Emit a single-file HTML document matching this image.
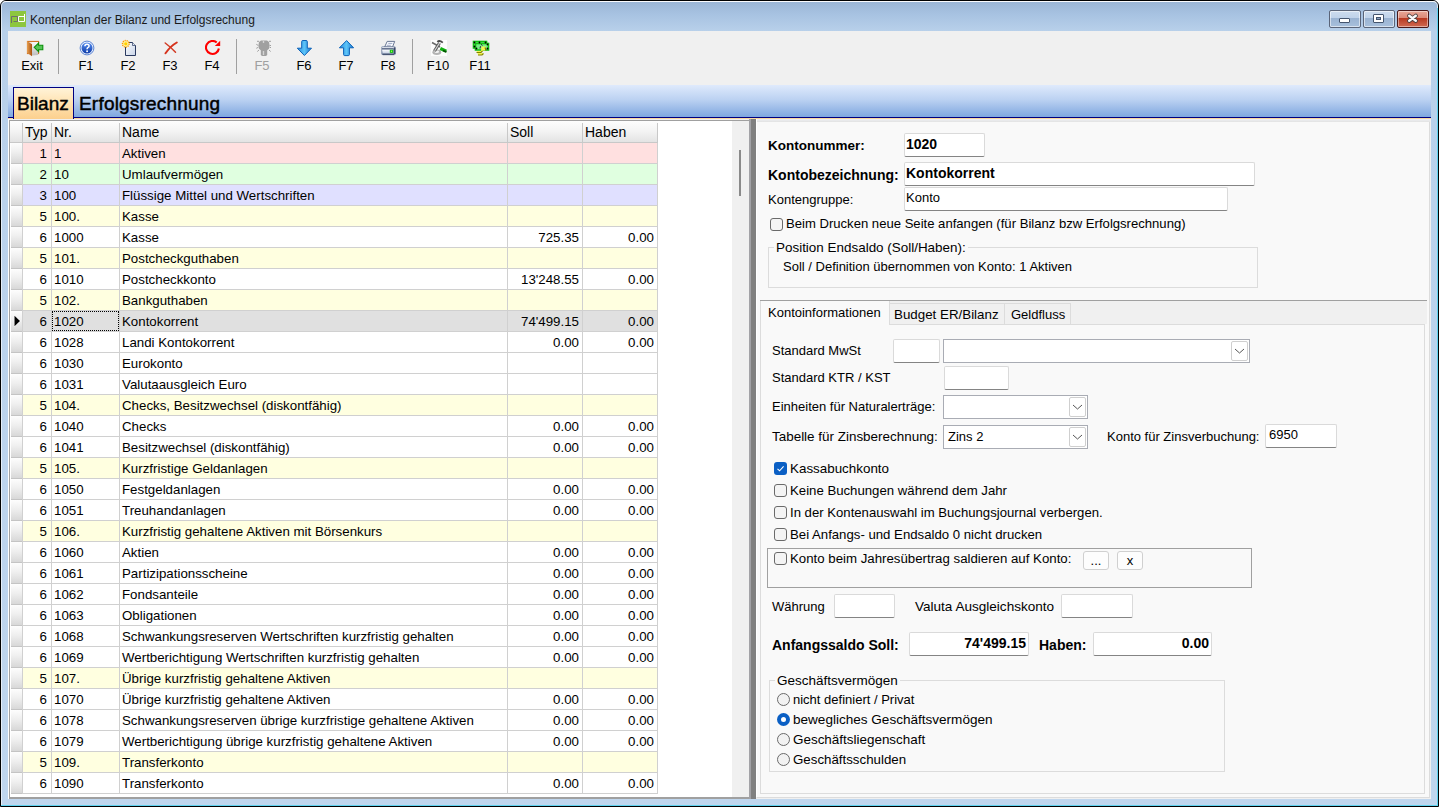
<!DOCTYPE html>
<html><head><meta charset="utf-8"><style>
*{margin:0;padding:0;box-sizing:border-box}
html,body{width:1439px;height:807px;overflow:hidden}
body{position:relative;font-family:"Liberation Sans",sans-serif;font-size:13px;color:#000;background:#fff}
.a{position:absolute}
.t{position:absolute;white-space:nowrap;line-height:16px}
.r{text-align:right}
.inp{position:absolute;background:#fff;border:1px solid #dadada;border-bottom-color:#848484;border-radius:2px}
.cb{position:absolute;width:13px;height:13px;border:1px solid #6a6a6a;border-radius:3px;background:#f4f4f4}
.rb{position:absolute;width:13px;height:13px;border:1px solid #6a6a6a;border-radius:50%;background:#f2f2f2}
.btn{position:absolute;background:#fdfdfd;border:1px solid #d0d0d0;border-radius:3px}
.dd{position:absolute;width:17px;border:1px solid #cfcfcf;border-radius:2px;background:#fff}
</style></head><body>

<div class="a" style="left:0;top:0;width:1439px;height:807px;border:1px solid #000;border-radius:6px 6px 0 0;background:linear-gradient(#9ab5d5 0px,#a8c3e2 14px,#b8d0ea 30px,#bad2ec 200px,#bfd6ee 807px)"></div>
<div class="a" style="left:1px;top:1px;width:1437px;height:805px;border:1px solid rgba(255,255,255,.6);border-top-color:rgba(255,255,255,.95);border-bottom:none;border-radius:5px 5px 0 0"></div>
<div class="a" style="left:1437px;top:8px;width:1px;height:798px;background:#5fd3f0"></div>
<div class="a" style="left:1px;top:805px;width:1437px;height:1px;background:#5fd3f0"></div>
<div class="a" style="left:10px;top:11px;width:16px;height:16px;background:#8dc63f"></div>
<svg class="a" style="left:10px;top:11px" width="16" height="16"><path d="M1.5 12V5.5H7.5V10.5H3.5" fill="none" stroke="#6d6d6d" stroke-width="1"/><path d="M14.5 5.5H8.5V10.5H14.5V3" fill="none" stroke="#fff" stroke-width="1"/></svg>
<div class="t" style="left:30px;top:12px;font-size:12px;color:#1a1a1a">Kontenplan der Bilanz und Erfolgsrechung</div>
<div class="a" style="left:1329px;top:10px;width:32px;height:18px;border:1px solid #5a6478;border-radius:2px;box-shadow:inset 0 0 0 1px rgba(255,255,255,.55);background:linear-gradient(#cddcee 0,#c0d3ea 42%,#9ab3d2 46%,#a8c0dc 100%)"></div>
<div class="a" style="left:1339px;top:18px;width:11px;height:5px;background:#fff;border:1px solid #44556e;border-radius:1px"></div>
<div class="a" style="left:1363px;top:10px;width:32px;height:18px;border:1px solid #5a6478;border-radius:2px;box-shadow:inset 0 0 0 1px rgba(255,255,255,.55);background:linear-gradient(#cddcee 0,#c0d3ea 42%,#9ab3d2 46%,#a8c0dc 100%)"></div>
<div class="a" style="left:1373px;top:14px;width:11px;height:9px;background:#fff;border:1px solid #44556e;border-radius:1px"></div><div class="a" style="left:1376px;top:17px;width:5px;height:3px;background:#8aa2c2;border:1px solid #44556e"></div>
<div class="a" style="left:1397px;top:10px;width:32px;height:18px;border:1px solid #4a1818;border-radius:2px;box-shadow:inset 0 0 0 1px rgba(255,255,255,.45);background:linear-gradient(#e8a898 0,#dc8a78 42%,#b83a22 46%,#d06a52 100%)"></div>
<svg class="a" style="left:1405px;top:12px" width="16" height="14"><path d="M4.2 3.8L10.8 8.8M10.8 3.8L4.2 8.8" stroke="#4a4040" stroke-width="4.2" stroke-linecap="round"/><path d="M4.2 3.8L10.8 8.8M10.8 3.8L4.2 8.8" stroke="#fafafa" stroke-width="2.4" stroke-linecap="round"/></svg>
<div class="a" style="left:8px;top:31px;width:1423px;height:768px;background:#f0f0f0"></div>
<div class="a" style="left:8px;top:119px;width:1px;height:680px;background:#fdfdfd"></div>
<div class="t" style="left:7px;top:58px;width:50px;text-align:center;color:#000">Exit</div>
<svg class="a" style="left:26px;top:40px" width="18" height="17"><defs><linearGradient id="dg" x1="0" x2="1"><stop offset="0" stop-color="#e8a050"/><stop offset="1" stop-color="#a85010"/></linearGradient><linearGradient id="fg" x1="0" x2="0" y1="0" y2="1"><stop offset="0" stop-color="#fafafa"/><stop offset="1" stop-color="#bcbcbc"/></linearGradient></defs><rect x="1.5" y="1.5" width="11" height="12" fill="none" stroke="#d27528" stroke-width="1.2"/><path d="M6 2.3H12V15L6 15.6Z" fill="url(#fg)"/><path d="M1 1L6 4.3V16.3L1 12.8Z" fill="url(#dg)"/><path d="M8.2 7.3L12.6 3.1V5.2H16.8V9.7H12.6V11.6Z" fill="#56c456" stroke="#089008" stroke-width="1.1"/></svg>
<div class="a" style="left:58px;top:39px;width:1px;height:35px;background:#a0a0a0"></div>
<div class="t" style="left:61px;top:58px;width:50px;text-align:center;color:#000">F1</div>
<svg class="a" style="left:79px;top:40px" width="16" height="16"><defs><linearGradient id="hg" x1="0" x2="0" y1="0" y2="1"><stop offset="0" stop-color="#5a90f0"/><stop offset="1" stop-color="#0c3aa8"/></linearGradient></defs><circle cx="8" cy="8" r="6.9" fill="#eef3fc" stroke="#4a78d0" stroke-width="0.9"/><circle cx="8" cy="8" r="5.5" fill="url(#hg)"/><path d="M5.9 6.2Q5.9 4.2 8 4.2Q10.1 4.2 10.1 6Q10.1 7.1 8.9 7.7Q8.1 8.1 8.1 9.2" fill="none" stroke="#fff" stroke-width="1.5"/><circle cx="8.1" cy="11.3" r="0.95" fill="#fff"/></svg>
<div class="t" style="left:103px;top:58px;width:50px;text-align:center;color:#000">F2</div>
<svg class="a" style="left:120px;top:38px" width="18" height="19"><defs><linearGradient id="pg" x1="0" x2="1" y1="0" y2="1"><stop offset="0" stop-color="#ffffff"/><stop offset="1" stop-color="#c8d4e8"/></linearGradient></defs><path d="M5.5 4.5H12.5L15.5 7.5V17.5H5.5Z" fill="url(#pg)" stroke="#2a3a60" stroke-width="1"/><path d="M12.5 4.5V7.5H15.5" fill="#e0e8f4" stroke="#2a3a60" stroke-width=".7"/><circle cx="5.8" cy="5.8" r="3.3" fill="#fff2a0" stroke="#ff9800" stroke-width="1.4" stroke-dasharray="1.1 0.9"/><circle cx="5.8" cy="5.8" r="1.6" fill="#ffd000"/></svg>
<div class="t" style="left:145px;top:58px;width:50px;text-align:center;color:#000">F3</div>
<svg class="a" style="left:163px;top:40px" width="16" height="16"><path d="M2.2 3Q7 6.5 12.5 12.3" fill="none" stroke="#d23a24" stroke-width="1.5" stroke-linecap="round"/><path d="M13.8 2.5Q7.5 6 2.5 13.3" fill="none" stroke="#d6321c" stroke-width="2" stroke-linecap="round"/></svg>
<div class="t" style="left:187px;top:58px;width:50px;text-align:center;color:#000">F4</div>
<svg class="a" style="left:205px;top:40px" width="16" height="16"><path d="M11.7 2.5A6.5 6.5 0 1 0 13.9 8.5" fill="none" stroke="#ff0000" stroke-width="2.1"/><path d="M9.8 5.9L15.2 0.8V5.9Z" fill="#ff0000"/></svg>
<div class="a" style="left:236px;top:39px;width:1px;height:35px;background:#a0a0a0"></div>
<div class="t" style="left:237px;top:58px;width:50px;text-align:center;color:#a0a0a0">F5</div>
<svg class="a" style="left:252px;top:37px" width="24" height="21"><path d="M9 3.6H15L17 5L17.6 8.5L17 11.8L15.2 13.3V18L14 19H10L8.8 18V13.3L7 11.8L6.4 8.5L7 5Z" fill="#a0a0a0"/><circle cx="11.5" cy="5" r=".8" fill="#f0f0f0"/><circle cx="11.5" cy="15" r=".8" fill="#f0f0f0"/><circle cx="11.5" cy="17" r=".8" fill="#f0f0f0"/><path d="M5 4.3H7M17 4.3H19M4.3 7.3L6.3 8.5M17.7 8.5L19 8.5M4.3 11.3L6.3 10.3M17.7 10.5L19 10.5M5.3 14.5L7 13M17 13L18.7 14.5" stroke="#a0a0a0" stroke-width="1"/></svg>
<div class="t" style="left:279px;top:58px;width:50px;text-align:center;color:#000">F6</div>
<svg class="a" style="left:296px;top:40px" width="17" height="17"><defs><linearGradient id="ag" x1="0" x2="1"><stop offset="0" stop-color="#2a8ee0"/><stop offset=".5" stop-color="#5cc4f8"/><stop offset="1" stop-color="#1a78d0"/></linearGradient></defs><path d="M5.7 1.6Q5.7 0.5 6.8 0.5H10.2Q11.3 0.5 11.3 1.6V8.2H15.5L8.4 15.5L1.3 8.2H5.7Z" fill="url(#ag)" stroke="#0c62b8" stroke-width="1"/></svg>
<div class="t" style="left:321px;top:58px;width:50px;text-align:center;color:#000">F7</div>
<svg class="a" style="left:338px;top:40px" width="17" height="17"><path d="M5.6 14.6Q5.6 15.6 6.7 15.6H10.3Q11.4 15.6 11.4 14.6V7.8H15.6L8.6 0.6L1.4 7.8H5.6Z" fill="url(#ag)" stroke="#0c62b8" stroke-width="1"/></svg>
<div class="t" style="left:363px;top:58px;width:50px;text-align:center;color:#000">F8</div>
<svg class="a" style="left:376px;top:37px" width="24" height="21"><defs><linearGradient id="prg" x1="0" x2="0" y1="0" y2="1"><stop offset="0" stop-color="#ffffff"/><stop offset="1" stop-color="#c8d2e4"/></linearGradient></defs><path d="M6.5 9.2H18.2Q19.8 9.2 19.8 11V16.5Q19.8 18.2 18 18.2H7.2Q5.2 18.2 5.2 16.2V10.8Q5.2 9.2 6.5 9.2Z" fill="#8a98b2"/><path d="M11.2 4.4H18.7L16.6 9.8H8.7Z" fill="#f8faff" stroke="#5a6a88" stroke-width="0.9"/><path d="M12.3 6.4H16.3M10.8 8.3H14.8" stroke="#8a98b8" stroke-width="0.8"/><path d="M6.2 10.2H17.8V11.4H6.2Z" fill="#eef2f8"/><path d="M6 12.6H17V16.2H6.8Z" fill="url(#prg)"/><path d="M6 11.8H17.6" stroke="#4a5878" stroke-width="1"/><path d="M18.6 10.5V17" stroke="#3a4866" stroke-width="1.4"/><path d="M6.5 17.3H18" stroke="#3a4866" stroke-width="1.1"/><rect x="13.8" y="12.8" width="3.4" height="3.1" fill="#12c012"/><circle cx="15.5" cy="14.3" r=".7" fill="#b0ff60"/></svg>
<div class="a" style="left:412px;top:39px;width:1px;height:35px;background:#a0a0a0"></div>
<div class="t" style="left:413px;top:58px;width:50px;text-align:center;color:#000">F10</div>
<svg class="a" style="left:429px;top:38px" width="20" height="20"><rect x="2" y="2" width="16" height="16" fill="#fdfdfd"/><ellipse cx="7.8" cy="14.2" rx="4.4" ry="2.7" fill="#b4b4b4"/><ellipse cx="7.8" cy="13.8" rx="2.3" ry="1.2" fill="#f4f4f4"/><path d="M3 4.5L11 9" stroke="#6a6a6a" stroke-width="1.5"/><path d="M10.5 5L5.5 13" stroke="#5a5a5a" stroke-width="3.2"/><path d="M10.5 5L5.6 12.8" stroke="#d8d8d8" stroke-width="1.2"/><path d="M8.3 3.8Q10.5 1.8 13.8 4.6" fill="none" stroke="#4a4a4a" stroke-width="1.8"/><path d="M11.3 10.5L17.3 13.3" stroke="#10b010" stroke-width="3.2"/><path d="M14 12.5L17.5 14" stroke="#045004" stroke-width="1.6"/></svg>
<div class="t" style="left:455px;top:58px;width:50px;text-align:center;color:#000">F11</div>
<svg class="a" style="left:470px;top:38px" width="22" height="20"><rect x="3.5" y="3.5" width="13" height="6.5" fill="#76ee86" stroke="#12c012" stroke-width="1.6"/><rect x="5.5" y="5.5" width="13" height="6.5" fill="#76ee86" stroke="#12c012" stroke-width="1.6"/><g fill="#000"><circle cx="4.5" cy="4.5" r=".9"/><circle cx="9.5" cy="4.5" r=".9"/><circle cx="15.5" cy="4.5" r=".9"/><circle cx="4.5" cy="8.5" r=".9"/><circle cx="6.5" cy="10.5" r=".9"/><circle cx="17.5" cy="6.5" r=".9"/><circle cx="17.5" cy="10.5" r=".9"/></g><path d="M11 6.2L12.5 7.6M10.5 8.2L10 10.5" stroke="#302040" stroke-width="1"/><path d="M11.5 8.5H16L15.5 12.5H13L11.5 14H6L7.5 13H11Z" fill="#f4f450"/><path d="M7.5 15H13.5L12.5 17H8Z" fill="#f4f450"/><path d="M6.5 14.5H11L12.5 13M8 17H12L13.5 15.5M15 9.5L16 12.5" fill="none" stroke="#808000" stroke-width="1.1"/></svg>
<div class="a" style="left:8px;top:85px;width:1423px;height:32px;background:linear-gradient(#dfeafc,#bcd2f2 45%,#7fa7df)"></div>
<div class="a" style="left:8px;top:117px;width:1423px;height:1px;background:#000080"></div>
<div class="a" style="left:8px;top:118px;width:1423px;height:1px;background:#fcd89e"></div>
<div class="a" style="left:13px;top:87px;width:61px;height:32px;border:1px solid #000080;border-width:1.5px 1.5px 0 1.5px;background:linear-gradient(#fff3d8,#ffe2b0 50%,#fcd08e)"></div>
<div class="t" style="left:17px;top:93px;font-size:19px;line-height:22px;-webkit-text-stroke:0.45px #000">Bilanz</div>
<div class="t" style="left:79px;top:93px;font-size:19px;line-height:22px;letter-spacing:0.2px;-webkit-text-stroke:0.45px #000">Erfolgsrechnung</div>
<div class="a" style="left:9px;top:120px;width:740px;height:679px;background:#fff;border:1px solid #a0a0a0;border-right:none"></div>
<div class="a" style="left:732px;top:121px;width:17px;height:677px;background:#f0f0f0"></div>
<div class="a" style="left:739px;top:150px;width:2px;height:46px;background:#8a8a8a"></div>
<div class="a" style="left:10px;top:121px;width:648px;height:22px;background:linear-gradient(#fdfdfd,#f3f3f3 50%,#e3e3e3);border-bottom:1px solid #c8c8c8"></div>
<div class="a" style="left:22px;top:123px;width:1px;height:19px;background:#c8c8c8"></div>
<div class="a" style="left:51px;top:123px;width:1px;height:19px;background:#c8c8c8"></div>
<div class="a" style="left:119px;top:123px;width:1px;height:19px;background:#c8c8c8"></div>
<div class="a" style="left:507px;top:123px;width:1px;height:19px;background:#c8c8c8"></div>
<div class="a" style="left:582px;top:123px;width:1px;height:19px;background:#c8c8c8"></div>
<div class="a" style="left:657px;top:123px;width:1px;height:19px;background:#c8c8c8"></div>
<div class="t" style="left:25px;top:124px;font-size:14px">Typ</div>
<div class="t" style="left:54px;top:124px;font-size:14px">Nr.</div>
<div class="t" style="left:122px;top:124px;font-size:14px">Name</div>
<div class="t" style="left:510px;top:124px;font-size:14px">Soll</div>
<div class="t" style="left:585px;top:124px;font-size:14px">Haben</div>
<div class="a" style="left:11px;top:143px;width:11px;height:21px;background:linear-gradient(#fdfdfd,#efefef 45%,#d8d8d8);border-bottom:1px solid #c4c4c4"></div>
<div class="a" style="left:23px;top:143px;width:635px;height:20px;background:#ffe0e0"></div>
<div class="a" style="left:23px;top:163px;width:635px;height:1px;background:#d0d0d0"></div>
<div class="a" style="left:22px;top:143px;width:1px;height:21px;background:#d0d0d0"></div>
<div class="a" style="left:51px;top:143px;width:1px;height:21px;background:#d0d0d0"></div>
<div class="a" style="left:119px;top:143px;width:1px;height:21px;background:#d0d0d0"></div>
<div class="a" style="left:507px;top:143px;width:1px;height:21px;background:#d0d0d0"></div>
<div class="a" style="left:582px;top:143px;width:1px;height:21px;background:#d0d0d0"></div>
<div class="a" style="left:657px;top:143px;width:1px;height:21px;background:#d0d0d0"></div>
<div class="t r" style="left:23px;top:146px;width:24px;font-size:13.3px">1</div>
<div class="t" style="left:54px;top:146px;font-size:13.3px">1</div>
<div class="t" style="left:122px;top:146px;font-size:13.3px">Aktiven</div>
<div class="a" style="left:11px;top:164px;width:11px;height:21px;background:linear-gradient(#fdfdfd,#efefef 45%,#d8d8d8);border-bottom:1px solid #c4c4c4"></div>
<div class="a" style="left:23px;top:164px;width:635px;height:20px;background:#e0ffe0"></div>
<div class="a" style="left:23px;top:184px;width:635px;height:1px;background:#d0d0d0"></div>
<div class="a" style="left:22px;top:164px;width:1px;height:21px;background:#d0d0d0"></div>
<div class="a" style="left:51px;top:164px;width:1px;height:21px;background:#d0d0d0"></div>
<div class="a" style="left:119px;top:164px;width:1px;height:21px;background:#d0d0d0"></div>
<div class="a" style="left:507px;top:164px;width:1px;height:21px;background:#d0d0d0"></div>
<div class="a" style="left:582px;top:164px;width:1px;height:21px;background:#d0d0d0"></div>
<div class="a" style="left:657px;top:164px;width:1px;height:21px;background:#d0d0d0"></div>
<div class="t r" style="left:23px;top:167px;width:24px;font-size:13.3px">2</div>
<div class="t" style="left:54px;top:167px;font-size:13.3px">10</div>
<div class="t" style="left:122px;top:167px;font-size:13.3px">Umlaufvermögen</div>
<div class="a" style="left:11px;top:185px;width:11px;height:21px;background:linear-gradient(#fdfdfd,#efefef 45%,#d8d8d8);border-bottom:1px solid #c4c4c4"></div>
<div class="a" style="left:23px;top:185px;width:635px;height:20px;background:#e0e0ff"></div>
<div class="a" style="left:23px;top:205px;width:635px;height:1px;background:#d0d0d0"></div>
<div class="a" style="left:22px;top:185px;width:1px;height:21px;background:#d0d0d0"></div>
<div class="a" style="left:51px;top:185px;width:1px;height:21px;background:#d0d0d0"></div>
<div class="a" style="left:119px;top:185px;width:1px;height:21px;background:#d0d0d0"></div>
<div class="a" style="left:507px;top:185px;width:1px;height:21px;background:#d0d0d0"></div>
<div class="a" style="left:582px;top:185px;width:1px;height:21px;background:#d0d0d0"></div>
<div class="a" style="left:657px;top:185px;width:1px;height:21px;background:#d0d0d0"></div>
<div class="t r" style="left:23px;top:188px;width:24px;font-size:13.3px">3</div>
<div class="t" style="left:54px;top:188px;font-size:13.3px">100</div>
<div class="t" style="left:122px;top:188px;font-size:13.3px">Flüssige Mittel und Wertschriften</div>
<div class="a" style="left:11px;top:206px;width:11px;height:21px;background:linear-gradient(#fdfdfd,#efefef 45%,#d8d8d8);border-bottom:1px solid #c4c4c4"></div>
<div class="a" style="left:23px;top:206px;width:635px;height:20px;background:#ffffe0"></div>
<div class="a" style="left:23px;top:226px;width:635px;height:1px;background:#d0d0d0"></div>
<div class="a" style="left:22px;top:206px;width:1px;height:21px;background:#d0d0d0"></div>
<div class="a" style="left:51px;top:206px;width:1px;height:21px;background:#d0d0d0"></div>
<div class="a" style="left:119px;top:206px;width:1px;height:21px;background:#d0d0d0"></div>
<div class="a" style="left:507px;top:206px;width:1px;height:21px;background:#d0d0d0"></div>
<div class="a" style="left:582px;top:206px;width:1px;height:21px;background:#d0d0d0"></div>
<div class="a" style="left:657px;top:206px;width:1px;height:21px;background:#d0d0d0"></div>
<div class="t r" style="left:23px;top:209px;width:24px;font-size:13.3px">5</div>
<div class="t" style="left:54px;top:209px;font-size:13.3px">100.</div>
<div class="t" style="left:122px;top:209px;font-size:13.3px">Kasse</div>
<div class="a" style="left:11px;top:227px;width:11px;height:21px;background:linear-gradient(#fdfdfd,#efefef 45%,#d8d8d8);border-bottom:1px solid #c4c4c4"></div>
<div class="a" style="left:23px;top:227px;width:635px;height:20px;background:#ffffff"></div>
<div class="a" style="left:23px;top:247px;width:635px;height:1px;background:#d0d0d0"></div>
<div class="a" style="left:22px;top:227px;width:1px;height:21px;background:#d0d0d0"></div>
<div class="a" style="left:51px;top:227px;width:1px;height:21px;background:#d0d0d0"></div>
<div class="a" style="left:119px;top:227px;width:1px;height:21px;background:#d0d0d0"></div>
<div class="a" style="left:507px;top:227px;width:1px;height:21px;background:#d0d0d0"></div>
<div class="a" style="left:582px;top:227px;width:1px;height:21px;background:#d0d0d0"></div>
<div class="a" style="left:657px;top:227px;width:1px;height:21px;background:#d0d0d0"></div>
<div class="t r" style="left:23px;top:230px;width:24px;font-size:13.3px">6</div>
<div class="t" style="left:54px;top:230px;font-size:13.3px">1000</div>
<div class="t" style="left:122px;top:230px;font-size:13.3px">Kasse</div>
<div class="t r" style="left:508px;top:230px;width:71px;font-size:13.3px">725.35</div>
<div class="t r" style="left:583px;top:230px;width:71px;font-size:13.3px">0.00</div>
<div class="a" style="left:11px;top:248px;width:11px;height:21px;background:linear-gradient(#fdfdfd,#efefef 45%,#d8d8d8);border-bottom:1px solid #c4c4c4"></div>
<div class="a" style="left:23px;top:248px;width:635px;height:20px;background:#ffffe0"></div>
<div class="a" style="left:23px;top:268px;width:635px;height:1px;background:#d0d0d0"></div>
<div class="a" style="left:22px;top:248px;width:1px;height:21px;background:#d0d0d0"></div>
<div class="a" style="left:51px;top:248px;width:1px;height:21px;background:#d0d0d0"></div>
<div class="a" style="left:119px;top:248px;width:1px;height:21px;background:#d0d0d0"></div>
<div class="a" style="left:507px;top:248px;width:1px;height:21px;background:#d0d0d0"></div>
<div class="a" style="left:582px;top:248px;width:1px;height:21px;background:#d0d0d0"></div>
<div class="a" style="left:657px;top:248px;width:1px;height:21px;background:#d0d0d0"></div>
<div class="t r" style="left:23px;top:251px;width:24px;font-size:13.3px">5</div>
<div class="t" style="left:54px;top:251px;font-size:13.3px">101.</div>
<div class="t" style="left:122px;top:251px;font-size:13.3px">Postcheckguthaben</div>
<div class="a" style="left:11px;top:269px;width:11px;height:21px;background:linear-gradient(#fdfdfd,#efefef 45%,#d8d8d8);border-bottom:1px solid #c4c4c4"></div>
<div class="a" style="left:23px;top:269px;width:635px;height:20px;background:#ffffff"></div>
<div class="a" style="left:23px;top:289px;width:635px;height:1px;background:#d0d0d0"></div>
<div class="a" style="left:22px;top:269px;width:1px;height:21px;background:#d0d0d0"></div>
<div class="a" style="left:51px;top:269px;width:1px;height:21px;background:#d0d0d0"></div>
<div class="a" style="left:119px;top:269px;width:1px;height:21px;background:#d0d0d0"></div>
<div class="a" style="left:507px;top:269px;width:1px;height:21px;background:#d0d0d0"></div>
<div class="a" style="left:582px;top:269px;width:1px;height:21px;background:#d0d0d0"></div>
<div class="a" style="left:657px;top:269px;width:1px;height:21px;background:#d0d0d0"></div>
<div class="t r" style="left:23px;top:272px;width:24px;font-size:13.3px">6</div>
<div class="t" style="left:54px;top:272px;font-size:13.3px">1010</div>
<div class="t" style="left:122px;top:272px;font-size:13.3px">Postcheckkonto</div>
<div class="t r" style="left:508px;top:272px;width:71px;font-size:13.3px">13'248.55</div>
<div class="t r" style="left:583px;top:272px;width:71px;font-size:13.3px">0.00</div>
<div class="a" style="left:11px;top:290px;width:11px;height:21px;background:linear-gradient(#fdfdfd,#efefef 45%,#d8d8d8);border-bottom:1px solid #c4c4c4"></div>
<div class="a" style="left:23px;top:290px;width:635px;height:20px;background:#ffffe0"></div>
<div class="a" style="left:23px;top:310px;width:635px;height:1px;background:#d0d0d0"></div>
<div class="a" style="left:22px;top:290px;width:1px;height:21px;background:#d0d0d0"></div>
<div class="a" style="left:51px;top:290px;width:1px;height:21px;background:#d0d0d0"></div>
<div class="a" style="left:119px;top:290px;width:1px;height:21px;background:#d0d0d0"></div>
<div class="a" style="left:507px;top:290px;width:1px;height:21px;background:#d0d0d0"></div>
<div class="a" style="left:582px;top:290px;width:1px;height:21px;background:#d0d0d0"></div>
<div class="a" style="left:657px;top:290px;width:1px;height:21px;background:#d0d0d0"></div>
<div class="t r" style="left:23px;top:293px;width:24px;font-size:13.3px">5</div>
<div class="t" style="left:54px;top:293px;font-size:13.3px">102.</div>
<div class="t" style="left:122px;top:293px;font-size:13.3px">Bankguthaben</div>
<div class="a" style="left:11px;top:311px;width:11px;height:21px;background:linear-gradient(#fdfdfd,#efefef 45%,#d8d8d8);border-bottom:1px solid #c4c4c4"></div>
<div class="a" style="left:23px;top:311px;width:635px;height:20px;background:#e0e0e0"></div>
<div class="a" style="left:23px;top:331px;width:635px;height:1px;background:#d0d0d0"></div>
<div class="a" style="left:22px;top:311px;width:1px;height:21px;background:#d0d0d0"></div>
<div class="a" style="left:51px;top:311px;width:1px;height:21px;background:#d0d0d0"></div>
<div class="a" style="left:119px;top:311px;width:1px;height:21px;background:#d0d0d0"></div>
<div class="a" style="left:507px;top:311px;width:1px;height:21px;background:#d0d0d0"></div>
<div class="a" style="left:582px;top:311px;width:1px;height:21px;background:#d0d0d0"></div>
<div class="a" style="left:657px;top:311px;width:1px;height:21px;background:#d0d0d0"></div>
<div class="t r" style="left:23px;top:314px;width:24px;font-size:13.3px">6</div>
<div class="t" style="left:54px;top:314px;font-size:13.3px">1020</div>
<div class="t" style="left:122px;top:314px;font-size:13.3px">Kontokorrent</div>
<div class="t r" style="left:508px;top:314px;width:71px;font-size:13.3px">74'499.15</div>
<div class="t r" style="left:583px;top:314px;width:71px;font-size:13.3px">0.00</div>
<svg class="a" style="left:13px;top:314px" width="9" height="14"><path d="M1 1V13L8 7Z" fill="#fff"/><path d="M1.5 1.8V12.2L7 7Z" fill="#000"/></svg>
<div class="a" style="left:52px;top:311px;width:67px;height:20px;border:1px dotted #000"></div>
<div class="a" style="left:11px;top:332px;width:11px;height:21px;background:linear-gradient(#fdfdfd,#efefef 45%,#d8d8d8);border-bottom:1px solid #c4c4c4"></div>
<div class="a" style="left:23px;top:332px;width:635px;height:20px;background:#ffffff"></div>
<div class="a" style="left:23px;top:352px;width:635px;height:1px;background:#d0d0d0"></div>
<div class="a" style="left:22px;top:332px;width:1px;height:21px;background:#d0d0d0"></div>
<div class="a" style="left:51px;top:332px;width:1px;height:21px;background:#d0d0d0"></div>
<div class="a" style="left:119px;top:332px;width:1px;height:21px;background:#d0d0d0"></div>
<div class="a" style="left:507px;top:332px;width:1px;height:21px;background:#d0d0d0"></div>
<div class="a" style="left:582px;top:332px;width:1px;height:21px;background:#d0d0d0"></div>
<div class="a" style="left:657px;top:332px;width:1px;height:21px;background:#d0d0d0"></div>
<div class="t r" style="left:23px;top:335px;width:24px;font-size:13.3px">6</div>
<div class="t" style="left:54px;top:335px;font-size:13.3px">1028</div>
<div class="t" style="left:122px;top:335px;font-size:13.3px">Landi Kontokorrent</div>
<div class="t r" style="left:508px;top:335px;width:71px;font-size:13.3px">0.00</div>
<div class="t r" style="left:583px;top:335px;width:71px;font-size:13.3px">0.00</div>
<div class="a" style="left:11px;top:353px;width:11px;height:21px;background:linear-gradient(#fdfdfd,#efefef 45%,#d8d8d8);border-bottom:1px solid #c4c4c4"></div>
<div class="a" style="left:23px;top:353px;width:635px;height:20px;background:#ffffff"></div>
<div class="a" style="left:23px;top:373px;width:635px;height:1px;background:#d0d0d0"></div>
<div class="a" style="left:22px;top:353px;width:1px;height:21px;background:#d0d0d0"></div>
<div class="a" style="left:51px;top:353px;width:1px;height:21px;background:#d0d0d0"></div>
<div class="a" style="left:119px;top:353px;width:1px;height:21px;background:#d0d0d0"></div>
<div class="a" style="left:507px;top:353px;width:1px;height:21px;background:#d0d0d0"></div>
<div class="a" style="left:582px;top:353px;width:1px;height:21px;background:#d0d0d0"></div>
<div class="a" style="left:657px;top:353px;width:1px;height:21px;background:#d0d0d0"></div>
<div class="t r" style="left:23px;top:356px;width:24px;font-size:13.3px">6</div>
<div class="t" style="left:54px;top:356px;font-size:13.3px">1030</div>
<div class="t" style="left:122px;top:356px;font-size:13.3px">Eurokonto</div>
<div class="a" style="left:11px;top:374px;width:11px;height:21px;background:linear-gradient(#fdfdfd,#efefef 45%,#d8d8d8);border-bottom:1px solid #c4c4c4"></div>
<div class="a" style="left:23px;top:374px;width:635px;height:20px;background:#ffffff"></div>
<div class="a" style="left:23px;top:394px;width:635px;height:1px;background:#d0d0d0"></div>
<div class="a" style="left:22px;top:374px;width:1px;height:21px;background:#d0d0d0"></div>
<div class="a" style="left:51px;top:374px;width:1px;height:21px;background:#d0d0d0"></div>
<div class="a" style="left:119px;top:374px;width:1px;height:21px;background:#d0d0d0"></div>
<div class="a" style="left:507px;top:374px;width:1px;height:21px;background:#d0d0d0"></div>
<div class="a" style="left:582px;top:374px;width:1px;height:21px;background:#d0d0d0"></div>
<div class="a" style="left:657px;top:374px;width:1px;height:21px;background:#d0d0d0"></div>
<div class="t r" style="left:23px;top:377px;width:24px;font-size:13.3px">6</div>
<div class="t" style="left:54px;top:377px;font-size:13.3px">1031</div>
<div class="t" style="left:122px;top:377px;font-size:13.3px">Valutaausgleich Euro</div>
<div class="a" style="left:11px;top:395px;width:11px;height:21px;background:linear-gradient(#fdfdfd,#efefef 45%,#d8d8d8);border-bottom:1px solid #c4c4c4"></div>
<div class="a" style="left:23px;top:395px;width:635px;height:20px;background:#ffffe0"></div>
<div class="a" style="left:23px;top:415px;width:635px;height:1px;background:#d0d0d0"></div>
<div class="a" style="left:22px;top:395px;width:1px;height:21px;background:#d0d0d0"></div>
<div class="a" style="left:51px;top:395px;width:1px;height:21px;background:#d0d0d0"></div>
<div class="a" style="left:119px;top:395px;width:1px;height:21px;background:#d0d0d0"></div>
<div class="a" style="left:507px;top:395px;width:1px;height:21px;background:#d0d0d0"></div>
<div class="a" style="left:582px;top:395px;width:1px;height:21px;background:#d0d0d0"></div>
<div class="a" style="left:657px;top:395px;width:1px;height:21px;background:#d0d0d0"></div>
<div class="t r" style="left:23px;top:398px;width:24px;font-size:13.3px">5</div>
<div class="t" style="left:54px;top:398px;font-size:13.3px">104.</div>
<div class="t" style="left:122px;top:398px;font-size:13.3px">Checks, Besitzwechsel (diskontfähig)</div>
<div class="a" style="left:11px;top:416px;width:11px;height:21px;background:linear-gradient(#fdfdfd,#efefef 45%,#d8d8d8);border-bottom:1px solid #c4c4c4"></div>
<div class="a" style="left:23px;top:416px;width:635px;height:20px;background:#ffffff"></div>
<div class="a" style="left:23px;top:436px;width:635px;height:1px;background:#d0d0d0"></div>
<div class="a" style="left:22px;top:416px;width:1px;height:21px;background:#d0d0d0"></div>
<div class="a" style="left:51px;top:416px;width:1px;height:21px;background:#d0d0d0"></div>
<div class="a" style="left:119px;top:416px;width:1px;height:21px;background:#d0d0d0"></div>
<div class="a" style="left:507px;top:416px;width:1px;height:21px;background:#d0d0d0"></div>
<div class="a" style="left:582px;top:416px;width:1px;height:21px;background:#d0d0d0"></div>
<div class="a" style="left:657px;top:416px;width:1px;height:21px;background:#d0d0d0"></div>
<div class="t r" style="left:23px;top:419px;width:24px;font-size:13.3px">6</div>
<div class="t" style="left:54px;top:419px;font-size:13.3px">1040</div>
<div class="t" style="left:122px;top:419px;font-size:13.3px">Checks</div>
<div class="t r" style="left:508px;top:419px;width:71px;font-size:13.3px">0.00</div>
<div class="t r" style="left:583px;top:419px;width:71px;font-size:13.3px">0.00</div>
<div class="a" style="left:11px;top:437px;width:11px;height:21px;background:linear-gradient(#fdfdfd,#efefef 45%,#d8d8d8);border-bottom:1px solid #c4c4c4"></div>
<div class="a" style="left:23px;top:437px;width:635px;height:20px;background:#ffffff"></div>
<div class="a" style="left:23px;top:457px;width:635px;height:1px;background:#d0d0d0"></div>
<div class="a" style="left:22px;top:437px;width:1px;height:21px;background:#d0d0d0"></div>
<div class="a" style="left:51px;top:437px;width:1px;height:21px;background:#d0d0d0"></div>
<div class="a" style="left:119px;top:437px;width:1px;height:21px;background:#d0d0d0"></div>
<div class="a" style="left:507px;top:437px;width:1px;height:21px;background:#d0d0d0"></div>
<div class="a" style="left:582px;top:437px;width:1px;height:21px;background:#d0d0d0"></div>
<div class="a" style="left:657px;top:437px;width:1px;height:21px;background:#d0d0d0"></div>
<div class="t r" style="left:23px;top:440px;width:24px;font-size:13.3px">6</div>
<div class="t" style="left:54px;top:440px;font-size:13.3px">1041</div>
<div class="t" style="left:122px;top:440px;font-size:13.3px">Besitzwechsel (diskontfähig)</div>
<div class="t r" style="left:508px;top:440px;width:71px;font-size:13.3px">0.00</div>
<div class="t r" style="left:583px;top:440px;width:71px;font-size:13.3px">0.00</div>
<div class="a" style="left:11px;top:458px;width:11px;height:21px;background:linear-gradient(#fdfdfd,#efefef 45%,#d8d8d8);border-bottom:1px solid #c4c4c4"></div>
<div class="a" style="left:23px;top:458px;width:635px;height:20px;background:#ffffe0"></div>
<div class="a" style="left:23px;top:478px;width:635px;height:1px;background:#d0d0d0"></div>
<div class="a" style="left:22px;top:458px;width:1px;height:21px;background:#d0d0d0"></div>
<div class="a" style="left:51px;top:458px;width:1px;height:21px;background:#d0d0d0"></div>
<div class="a" style="left:119px;top:458px;width:1px;height:21px;background:#d0d0d0"></div>
<div class="a" style="left:507px;top:458px;width:1px;height:21px;background:#d0d0d0"></div>
<div class="a" style="left:582px;top:458px;width:1px;height:21px;background:#d0d0d0"></div>
<div class="a" style="left:657px;top:458px;width:1px;height:21px;background:#d0d0d0"></div>
<div class="t r" style="left:23px;top:461px;width:24px;font-size:13.3px">5</div>
<div class="t" style="left:54px;top:461px;font-size:13.3px">105.</div>
<div class="t" style="left:122px;top:461px;font-size:13.3px">Kurzfristige Geldanlagen</div>
<div class="a" style="left:11px;top:479px;width:11px;height:21px;background:linear-gradient(#fdfdfd,#efefef 45%,#d8d8d8);border-bottom:1px solid #c4c4c4"></div>
<div class="a" style="left:23px;top:479px;width:635px;height:20px;background:#ffffff"></div>
<div class="a" style="left:23px;top:499px;width:635px;height:1px;background:#d0d0d0"></div>
<div class="a" style="left:22px;top:479px;width:1px;height:21px;background:#d0d0d0"></div>
<div class="a" style="left:51px;top:479px;width:1px;height:21px;background:#d0d0d0"></div>
<div class="a" style="left:119px;top:479px;width:1px;height:21px;background:#d0d0d0"></div>
<div class="a" style="left:507px;top:479px;width:1px;height:21px;background:#d0d0d0"></div>
<div class="a" style="left:582px;top:479px;width:1px;height:21px;background:#d0d0d0"></div>
<div class="a" style="left:657px;top:479px;width:1px;height:21px;background:#d0d0d0"></div>
<div class="t r" style="left:23px;top:482px;width:24px;font-size:13.3px">6</div>
<div class="t" style="left:54px;top:482px;font-size:13.3px">1050</div>
<div class="t" style="left:122px;top:482px;font-size:13.3px">Festgeldanlagen</div>
<div class="t r" style="left:508px;top:482px;width:71px;font-size:13.3px">0.00</div>
<div class="t r" style="left:583px;top:482px;width:71px;font-size:13.3px">0.00</div>
<div class="a" style="left:11px;top:500px;width:11px;height:21px;background:linear-gradient(#fdfdfd,#efefef 45%,#d8d8d8);border-bottom:1px solid #c4c4c4"></div>
<div class="a" style="left:23px;top:500px;width:635px;height:20px;background:#ffffff"></div>
<div class="a" style="left:23px;top:520px;width:635px;height:1px;background:#d0d0d0"></div>
<div class="a" style="left:22px;top:500px;width:1px;height:21px;background:#d0d0d0"></div>
<div class="a" style="left:51px;top:500px;width:1px;height:21px;background:#d0d0d0"></div>
<div class="a" style="left:119px;top:500px;width:1px;height:21px;background:#d0d0d0"></div>
<div class="a" style="left:507px;top:500px;width:1px;height:21px;background:#d0d0d0"></div>
<div class="a" style="left:582px;top:500px;width:1px;height:21px;background:#d0d0d0"></div>
<div class="a" style="left:657px;top:500px;width:1px;height:21px;background:#d0d0d0"></div>
<div class="t r" style="left:23px;top:503px;width:24px;font-size:13.3px">6</div>
<div class="t" style="left:54px;top:503px;font-size:13.3px">1051</div>
<div class="t" style="left:122px;top:503px;font-size:13.3px">Treuhandanlagen</div>
<div class="t r" style="left:508px;top:503px;width:71px;font-size:13.3px">0.00</div>
<div class="t r" style="left:583px;top:503px;width:71px;font-size:13.3px">0.00</div>
<div class="a" style="left:11px;top:521px;width:11px;height:21px;background:linear-gradient(#fdfdfd,#efefef 45%,#d8d8d8);border-bottom:1px solid #c4c4c4"></div>
<div class="a" style="left:23px;top:521px;width:635px;height:20px;background:#ffffe0"></div>
<div class="a" style="left:23px;top:541px;width:635px;height:1px;background:#d0d0d0"></div>
<div class="a" style="left:22px;top:521px;width:1px;height:21px;background:#d0d0d0"></div>
<div class="a" style="left:51px;top:521px;width:1px;height:21px;background:#d0d0d0"></div>
<div class="a" style="left:119px;top:521px;width:1px;height:21px;background:#d0d0d0"></div>
<div class="a" style="left:507px;top:521px;width:1px;height:21px;background:#d0d0d0"></div>
<div class="a" style="left:582px;top:521px;width:1px;height:21px;background:#d0d0d0"></div>
<div class="a" style="left:657px;top:521px;width:1px;height:21px;background:#d0d0d0"></div>
<div class="t r" style="left:23px;top:524px;width:24px;font-size:13.3px">5</div>
<div class="t" style="left:54px;top:524px;font-size:13.3px">106.</div>
<div class="t" style="left:122px;top:524px;font-size:13.3px">Kurzfristig gehaltene Aktiven mit Börsenkurs</div>
<div class="a" style="left:11px;top:542px;width:11px;height:21px;background:linear-gradient(#fdfdfd,#efefef 45%,#d8d8d8);border-bottom:1px solid #c4c4c4"></div>
<div class="a" style="left:23px;top:542px;width:635px;height:20px;background:#ffffff"></div>
<div class="a" style="left:23px;top:562px;width:635px;height:1px;background:#d0d0d0"></div>
<div class="a" style="left:22px;top:542px;width:1px;height:21px;background:#d0d0d0"></div>
<div class="a" style="left:51px;top:542px;width:1px;height:21px;background:#d0d0d0"></div>
<div class="a" style="left:119px;top:542px;width:1px;height:21px;background:#d0d0d0"></div>
<div class="a" style="left:507px;top:542px;width:1px;height:21px;background:#d0d0d0"></div>
<div class="a" style="left:582px;top:542px;width:1px;height:21px;background:#d0d0d0"></div>
<div class="a" style="left:657px;top:542px;width:1px;height:21px;background:#d0d0d0"></div>
<div class="t r" style="left:23px;top:545px;width:24px;font-size:13.3px">6</div>
<div class="t" style="left:54px;top:545px;font-size:13.3px">1060</div>
<div class="t" style="left:122px;top:545px;font-size:13.3px">Aktien</div>
<div class="t r" style="left:508px;top:545px;width:71px;font-size:13.3px">0.00</div>
<div class="t r" style="left:583px;top:545px;width:71px;font-size:13.3px">0.00</div>
<div class="a" style="left:11px;top:563px;width:11px;height:21px;background:linear-gradient(#fdfdfd,#efefef 45%,#d8d8d8);border-bottom:1px solid #c4c4c4"></div>
<div class="a" style="left:23px;top:563px;width:635px;height:20px;background:#ffffff"></div>
<div class="a" style="left:23px;top:583px;width:635px;height:1px;background:#d0d0d0"></div>
<div class="a" style="left:22px;top:563px;width:1px;height:21px;background:#d0d0d0"></div>
<div class="a" style="left:51px;top:563px;width:1px;height:21px;background:#d0d0d0"></div>
<div class="a" style="left:119px;top:563px;width:1px;height:21px;background:#d0d0d0"></div>
<div class="a" style="left:507px;top:563px;width:1px;height:21px;background:#d0d0d0"></div>
<div class="a" style="left:582px;top:563px;width:1px;height:21px;background:#d0d0d0"></div>
<div class="a" style="left:657px;top:563px;width:1px;height:21px;background:#d0d0d0"></div>
<div class="t r" style="left:23px;top:566px;width:24px;font-size:13.3px">6</div>
<div class="t" style="left:54px;top:566px;font-size:13.3px">1061</div>
<div class="t" style="left:122px;top:566px;font-size:13.3px">Partizipationsscheine</div>
<div class="t r" style="left:508px;top:566px;width:71px;font-size:13.3px">0.00</div>
<div class="t r" style="left:583px;top:566px;width:71px;font-size:13.3px">0.00</div>
<div class="a" style="left:11px;top:584px;width:11px;height:21px;background:linear-gradient(#fdfdfd,#efefef 45%,#d8d8d8);border-bottom:1px solid #c4c4c4"></div>
<div class="a" style="left:23px;top:584px;width:635px;height:20px;background:#ffffff"></div>
<div class="a" style="left:23px;top:604px;width:635px;height:1px;background:#d0d0d0"></div>
<div class="a" style="left:22px;top:584px;width:1px;height:21px;background:#d0d0d0"></div>
<div class="a" style="left:51px;top:584px;width:1px;height:21px;background:#d0d0d0"></div>
<div class="a" style="left:119px;top:584px;width:1px;height:21px;background:#d0d0d0"></div>
<div class="a" style="left:507px;top:584px;width:1px;height:21px;background:#d0d0d0"></div>
<div class="a" style="left:582px;top:584px;width:1px;height:21px;background:#d0d0d0"></div>
<div class="a" style="left:657px;top:584px;width:1px;height:21px;background:#d0d0d0"></div>
<div class="t r" style="left:23px;top:587px;width:24px;font-size:13.3px">6</div>
<div class="t" style="left:54px;top:587px;font-size:13.3px">1062</div>
<div class="t" style="left:122px;top:587px;font-size:13.3px">Fondsanteile</div>
<div class="t r" style="left:508px;top:587px;width:71px;font-size:13.3px">0.00</div>
<div class="t r" style="left:583px;top:587px;width:71px;font-size:13.3px">0.00</div>
<div class="a" style="left:11px;top:605px;width:11px;height:21px;background:linear-gradient(#fdfdfd,#efefef 45%,#d8d8d8);border-bottom:1px solid #c4c4c4"></div>
<div class="a" style="left:23px;top:605px;width:635px;height:20px;background:#ffffff"></div>
<div class="a" style="left:23px;top:625px;width:635px;height:1px;background:#d0d0d0"></div>
<div class="a" style="left:22px;top:605px;width:1px;height:21px;background:#d0d0d0"></div>
<div class="a" style="left:51px;top:605px;width:1px;height:21px;background:#d0d0d0"></div>
<div class="a" style="left:119px;top:605px;width:1px;height:21px;background:#d0d0d0"></div>
<div class="a" style="left:507px;top:605px;width:1px;height:21px;background:#d0d0d0"></div>
<div class="a" style="left:582px;top:605px;width:1px;height:21px;background:#d0d0d0"></div>
<div class="a" style="left:657px;top:605px;width:1px;height:21px;background:#d0d0d0"></div>
<div class="t r" style="left:23px;top:608px;width:24px;font-size:13.3px">6</div>
<div class="t" style="left:54px;top:608px;font-size:13.3px">1063</div>
<div class="t" style="left:122px;top:608px;font-size:13.3px">Obligationen</div>
<div class="t r" style="left:508px;top:608px;width:71px;font-size:13.3px">0.00</div>
<div class="t r" style="left:583px;top:608px;width:71px;font-size:13.3px">0.00</div>
<div class="a" style="left:11px;top:626px;width:11px;height:21px;background:linear-gradient(#fdfdfd,#efefef 45%,#d8d8d8);border-bottom:1px solid #c4c4c4"></div>
<div class="a" style="left:23px;top:626px;width:635px;height:20px;background:#ffffff"></div>
<div class="a" style="left:23px;top:646px;width:635px;height:1px;background:#d0d0d0"></div>
<div class="a" style="left:22px;top:626px;width:1px;height:21px;background:#d0d0d0"></div>
<div class="a" style="left:51px;top:626px;width:1px;height:21px;background:#d0d0d0"></div>
<div class="a" style="left:119px;top:626px;width:1px;height:21px;background:#d0d0d0"></div>
<div class="a" style="left:507px;top:626px;width:1px;height:21px;background:#d0d0d0"></div>
<div class="a" style="left:582px;top:626px;width:1px;height:21px;background:#d0d0d0"></div>
<div class="a" style="left:657px;top:626px;width:1px;height:21px;background:#d0d0d0"></div>
<div class="t r" style="left:23px;top:629px;width:24px;font-size:13.3px">6</div>
<div class="t" style="left:54px;top:629px;font-size:13.3px">1068</div>
<div class="t" style="left:122px;top:629px;font-size:13.3px">Schwankungsreserven Wertschriften kurzfristig gehalten</div>
<div class="t r" style="left:508px;top:629px;width:71px;font-size:13.3px">0.00</div>
<div class="t r" style="left:583px;top:629px;width:71px;font-size:13.3px">0.00</div>
<div class="a" style="left:11px;top:647px;width:11px;height:21px;background:linear-gradient(#fdfdfd,#efefef 45%,#d8d8d8);border-bottom:1px solid #c4c4c4"></div>
<div class="a" style="left:23px;top:647px;width:635px;height:20px;background:#ffffff"></div>
<div class="a" style="left:23px;top:667px;width:635px;height:1px;background:#d0d0d0"></div>
<div class="a" style="left:22px;top:647px;width:1px;height:21px;background:#d0d0d0"></div>
<div class="a" style="left:51px;top:647px;width:1px;height:21px;background:#d0d0d0"></div>
<div class="a" style="left:119px;top:647px;width:1px;height:21px;background:#d0d0d0"></div>
<div class="a" style="left:507px;top:647px;width:1px;height:21px;background:#d0d0d0"></div>
<div class="a" style="left:582px;top:647px;width:1px;height:21px;background:#d0d0d0"></div>
<div class="a" style="left:657px;top:647px;width:1px;height:21px;background:#d0d0d0"></div>
<div class="t r" style="left:23px;top:650px;width:24px;font-size:13.3px">6</div>
<div class="t" style="left:54px;top:650px;font-size:13.3px">1069</div>
<div class="t" style="left:122px;top:650px;font-size:13.3px">Wertberichtigung Wertschriften kurzfristig gehalten</div>
<div class="t r" style="left:508px;top:650px;width:71px;font-size:13.3px">0.00</div>
<div class="t r" style="left:583px;top:650px;width:71px;font-size:13.3px">0.00</div>
<div class="a" style="left:11px;top:668px;width:11px;height:21px;background:linear-gradient(#fdfdfd,#efefef 45%,#d8d8d8);border-bottom:1px solid #c4c4c4"></div>
<div class="a" style="left:23px;top:668px;width:635px;height:20px;background:#ffffe0"></div>
<div class="a" style="left:23px;top:688px;width:635px;height:1px;background:#d0d0d0"></div>
<div class="a" style="left:22px;top:668px;width:1px;height:21px;background:#d0d0d0"></div>
<div class="a" style="left:51px;top:668px;width:1px;height:21px;background:#d0d0d0"></div>
<div class="a" style="left:119px;top:668px;width:1px;height:21px;background:#d0d0d0"></div>
<div class="a" style="left:507px;top:668px;width:1px;height:21px;background:#d0d0d0"></div>
<div class="a" style="left:582px;top:668px;width:1px;height:21px;background:#d0d0d0"></div>
<div class="a" style="left:657px;top:668px;width:1px;height:21px;background:#d0d0d0"></div>
<div class="t r" style="left:23px;top:671px;width:24px;font-size:13.3px">5</div>
<div class="t" style="left:54px;top:671px;font-size:13.3px">107.</div>
<div class="t" style="left:122px;top:671px;font-size:13.3px">Übrige kurzfristig gehaltene Aktiven</div>
<div class="a" style="left:11px;top:689px;width:11px;height:21px;background:linear-gradient(#fdfdfd,#efefef 45%,#d8d8d8);border-bottom:1px solid #c4c4c4"></div>
<div class="a" style="left:23px;top:689px;width:635px;height:20px;background:#ffffff"></div>
<div class="a" style="left:23px;top:709px;width:635px;height:1px;background:#d0d0d0"></div>
<div class="a" style="left:22px;top:689px;width:1px;height:21px;background:#d0d0d0"></div>
<div class="a" style="left:51px;top:689px;width:1px;height:21px;background:#d0d0d0"></div>
<div class="a" style="left:119px;top:689px;width:1px;height:21px;background:#d0d0d0"></div>
<div class="a" style="left:507px;top:689px;width:1px;height:21px;background:#d0d0d0"></div>
<div class="a" style="left:582px;top:689px;width:1px;height:21px;background:#d0d0d0"></div>
<div class="a" style="left:657px;top:689px;width:1px;height:21px;background:#d0d0d0"></div>
<div class="t r" style="left:23px;top:692px;width:24px;font-size:13.3px">6</div>
<div class="t" style="left:54px;top:692px;font-size:13.3px">1070</div>
<div class="t" style="left:122px;top:692px;font-size:13.3px">Übrige kurzfristig gehaltene Aktiven</div>
<div class="t r" style="left:508px;top:692px;width:71px;font-size:13.3px">0.00</div>
<div class="t r" style="left:583px;top:692px;width:71px;font-size:13.3px">0.00</div>
<div class="a" style="left:11px;top:710px;width:11px;height:21px;background:linear-gradient(#fdfdfd,#efefef 45%,#d8d8d8);border-bottom:1px solid #c4c4c4"></div>
<div class="a" style="left:23px;top:710px;width:635px;height:20px;background:#ffffff"></div>
<div class="a" style="left:23px;top:730px;width:635px;height:1px;background:#d0d0d0"></div>
<div class="a" style="left:22px;top:710px;width:1px;height:21px;background:#d0d0d0"></div>
<div class="a" style="left:51px;top:710px;width:1px;height:21px;background:#d0d0d0"></div>
<div class="a" style="left:119px;top:710px;width:1px;height:21px;background:#d0d0d0"></div>
<div class="a" style="left:507px;top:710px;width:1px;height:21px;background:#d0d0d0"></div>
<div class="a" style="left:582px;top:710px;width:1px;height:21px;background:#d0d0d0"></div>
<div class="a" style="left:657px;top:710px;width:1px;height:21px;background:#d0d0d0"></div>
<div class="t r" style="left:23px;top:713px;width:24px;font-size:13.3px">6</div>
<div class="t" style="left:54px;top:713px;font-size:13.3px">1078</div>
<div class="t" style="left:122px;top:713px;font-size:13.3px">Schwankungsreserven übrige kurzfristige gehaltene Aktiven</div>
<div class="t r" style="left:508px;top:713px;width:71px;font-size:13.3px">0.00</div>
<div class="t r" style="left:583px;top:713px;width:71px;font-size:13.3px">0.00</div>
<div class="a" style="left:11px;top:731px;width:11px;height:21px;background:linear-gradient(#fdfdfd,#efefef 45%,#d8d8d8);border-bottom:1px solid #c4c4c4"></div>
<div class="a" style="left:23px;top:731px;width:635px;height:20px;background:#ffffff"></div>
<div class="a" style="left:23px;top:751px;width:635px;height:1px;background:#d0d0d0"></div>
<div class="a" style="left:22px;top:731px;width:1px;height:21px;background:#d0d0d0"></div>
<div class="a" style="left:51px;top:731px;width:1px;height:21px;background:#d0d0d0"></div>
<div class="a" style="left:119px;top:731px;width:1px;height:21px;background:#d0d0d0"></div>
<div class="a" style="left:507px;top:731px;width:1px;height:21px;background:#d0d0d0"></div>
<div class="a" style="left:582px;top:731px;width:1px;height:21px;background:#d0d0d0"></div>
<div class="a" style="left:657px;top:731px;width:1px;height:21px;background:#d0d0d0"></div>
<div class="t r" style="left:23px;top:734px;width:24px;font-size:13.3px">6</div>
<div class="t" style="left:54px;top:734px;font-size:13.3px">1079</div>
<div class="t" style="left:122px;top:734px;font-size:13.3px">Wertberichtigung übrige kurzfristig gehaltene Aktiven</div>
<div class="t r" style="left:508px;top:734px;width:71px;font-size:13.3px">0.00</div>
<div class="t r" style="left:583px;top:734px;width:71px;font-size:13.3px">0.00</div>
<div class="a" style="left:11px;top:752px;width:11px;height:21px;background:linear-gradient(#fdfdfd,#efefef 45%,#d8d8d8);border-bottom:1px solid #c4c4c4"></div>
<div class="a" style="left:23px;top:752px;width:635px;height:20px;background:#ffffe0"></div>
<div class="a" style="left:23px;top:772px;width:635px;height:1px;background:#d0d0d0"></div>
<div class="a" style="left:22px;top:752px;width:1px;height:21px;background:#d0d0d0"></div>
<div class="a" style="left:51px;top:752px;width:1px;height:21px;background:#d0d0d0"></div>
<div class="a" style="left:119px;top:752px;width:1px;height:21px;background:#d0d0d0"></div>
<div class="a" style="left:507px;top:752px;width:1px;height:21px;background:#d0d0d0"></div>
<div class="a" style="left:582px;top:752px;width:1px;height:21px;background:#d0d0d0"></div>
<div class="a" style="left:657px;top:752px;width:1px;height:21px;background:#d0d0d0"></div>
<div class="t r" style="left:23px;top:755px;width:24px;font-size:13.3px">5</div>
<div class="t" style="left:54px;top:755px;font-size:13.3px">109.</div>
<div class="t" style="left:122px;top:755px;font-size:13.3px">Transferkonto</div>
<div class="a" style="left:11px;top:773px;width:11px;height:21px;background:linear-gradient(#fdfdfd,#efefef 45%,#d8d8d8);border-bottom:1px solid #c4c4c4"></div>
<div class="a" style="left:23px;top:773px;width:635px;height:20px;background:#ffffff"></div>
<div class="a" style="left:23px;top:793px;width:635px;height:1px;background:#d0d0d0"></div>
<div class="a" style="left:22px;top:773px;width:1px;height:21px;background:#d0d0d0"></div>
<div class="a" style="left:51px;top:773px;width:1px;height:21px;background:#d0d0d0"></div>
<div class="a" style="left:119px;top:773px;width:1px;height:21px;background:#d0d0d0"></div>
<div class="a" style="left:507px;top:773px;width:1px;height:21px;background:#d0d0d0"></div>
<div class="a" style="left:582px;top:773px;width:1px;height:21px;background:#d0d0d0"></div>
<div class="a" style="left:657px;top:773px;width:1px;height:21px;background:#d0d0d0"></div>
<div class="t r" style="left:23px;top:776px;width:24px;font-size:13.3px">6</div>
<div class="t" style="left:54px;top:776px;font-size:13.3px">1090</div>
<div class="t" style="left:122px;top:776px;font-size:13.3px">Transferkonto</div>
<div class="t r" style="left:508px;top:776px;width:71px;font-size:13.3px">0.00</div>
<div class="t r" style="left:583px;top:776px;width:71px;font-size:13.3px">0.00</div>
<div class="a" style="left:9px;top:797px;width:740px;height:1px;background:#a0a0a0"></div>
<div class="a" style="left:749px;top:119px;width:2px;height:680px;background:#a2a2a6"></div>
<div class="a" style="left:751px;top:119px;width:5px;height:680px;background:#808080"></div>
<div class="a" style="left:756px;top:119px;width:674px;height:679px;background:#f9f9f9;border-left:1px solid #fff;border-right:1px solid #dcdcdc;border-bottom:1px solid #dcdcdc"></div>
<div class="a" style="left:757px;top:119px;width:673px;height:3px;background:linear-gradient(#f0f2f6,#e2e2e2)"></div>
<div class="t" style="left:768px;top:138px;font-weight:bold;font-size:13.5px">Kontonummer:</div>
<div class="inp" style="left:904px;top:133px;width:81px;height:24px"></div>
<div class="t" style="left:906px;top:136px;font-weight:bold;font-size:14px">1020</div>
<div class="t" style="left:768px;top:167px;font-weight:bold;font-size:14px">Kontobezeichnung:</div>
<div class="inp" style="left:904px;top:162px;width:351px;height:24px"></div>
<div class="t" style="left:906px;top:165px;font-weight:bold;font-size:14px">Kontokorrent</div>
<div class="t" style="left:768px;top:192px">Kontengruppe:</div>
<div class="inp" style="left:904px;top:187px;width:324px;height:24px"></div>
<div class="t" style="left:906px;top:190px">Konto</div>
<div class="cb" style="left:770px;top:218px"></div>
<div class="t" style="left:786px;top:216px;font-size:13.1px">Beim Drucken neue Seite anfangen (für Bilanz bzw Erfolgsrechnung)</div>
<div class="a" style="left:768px;top:247px;width:490px;height:41px;border:1px solid #dcdcdc"></div>
<div class="t" style="left:774px;top:240px;background:#f9f9f9;padding:0 2px;font-size:13.45px">Position Endsaldo (Soll/Haben):</div>
<div class="t" style="left:783px;top:259px">Soll / Definition übernommen von Konto: 1 Aktiven</div>
<div class="a" style="left:760px;top:300px;width:667px;height:1px;background:#a0a0a0"></div>
<div class="a" style="left:760px;top:301px;width:667px;height:23px;background:#f0f0f0"></div>
<div class="a" style="left:760px;top:324px;width:665px;height:470px;background:#f9f9f9;border:1px solid #dcdcdc;border-top:none"></div>
<div class="a" style="left:760px;top:301px;width:130px;height:24px;background:#f9f9f9;border-left:1px solid #dcdcdc;border-right:1px solid #dcdcdc"></div>
<div class="t" style="left:768px;top:305px">Kontoinformationen</div>
<div class="a" style="left:890px;top:303px;width:115px;height:21px;background:#f0f0f0;border:1px solid #dcdcdc;border-left:none;border-bottom:none"></div>
<div class="t" style="left:894px;top:307px;font-size:13.35px">Budget ER/Bilanz</div>
<div class="a" style="left:1005px;top:303px;width:66px;height:21px;background:#f0f0f0;border:1px solid #dcdcdc;border-left:none;border-bottom:none"></div>
<div class="t" style="left:1011px;top:307px">Geldfluss</div>
<div class="a" style="left:889px;top:324px;width:536px;height:1px;background:#dcdcdc"></div>
<div class="t" style="left:772px;top:343px">Standard MwSt</div>
<div class="inp" style="left:893px;top:339px;width:47px;height:24px"></div>
<div class="a" style="left:943px;top:339px;width:307px;height:24px;background:#fff;border:1px solid #a9acb4"></div>
<div class="dd" style="left:1231px;top:341px;height:20px"></div>
<svg class="a" style="left:1234px;top:348px" width="11" height="6"><path d="M1 1L5.5 5L10 1" fill="none" stroke="#555" stroke-width="1"/></svg>
<div class="t" style="left:772px;top:370px">Standard KTR / KST</div>
<div class="inp" style="left:944px;top:366px;width:65px;height:24px"></div>
<div class="t" style="left:772px;top:399px">Einheiten für Naturalerträge:</div>
<div class="a" style="left:943px;top:395px;width:145px;height:24px;background:#fff;border:1px solid #a9acb4"></div>
<div class="dd" style="left:1069px;top:397px;height:20px"></div>
<svg class="a" style="left:1072px;top:404px" width="11" height="6"><path d="M1 1L5.5 5L10 1" fill="none" stroke="#555" stroke-width="1"/></svg>
<div class="t" style="left:772px;top:429px;font-size:13.45px">Tabelle für Zinsberechnung:</div>
<div class="a" style="left:943px;top:425px;width:145px;height:24px;background:#fff;border:1px solid #a9acb4"></div>
<div class="t" style="left:948px;top:429px">Zins 2</div>
<div class="dd" style="left:1069px;top:427px;height:20px"></div>
<svg class="a" style="left:1072px;top:434px" width="11" height="6"><path d="M1 1L5.5 5L10 1" fill="none" stroke="#555" stroke-width="1"/></svg>
<div class="t" style="left:1107px;top:429px">Konto für Zinsverbuchung:</div>
<div class="inp" style="left:1265px;top:424px;width:72px;height:24px"></div>
<div class="t" style="left:1269px;top:427px">6950</div>
<div class="a" style="left:774px;top:462px;width:13px;height:13px;border-radius:3px;background:#0a5fc4"></div>
<svg class="a" style="left:774px;top:462px" width="13" height="13"><path d="M3.5 6.8L5.6 8.8L9.6 4.4" fill="none" stroke="#fff" stroke-width="1.1"/></svg>
<div class="t" style="left:790px;top:461px;font-size:13.4px">Kassabuchkonto</div>
<div class="cb" style="left:774px;top:484px"></div>
<div class="t" style="left:790px;top:483px;font-size:13.2px">Keine Buchungen während dem Jahr</div>
<div class="cb" style="left:774px;top:506px"></div>
<div class="t" style="left:790px;top:505px;font-size:13.15px">In der Kontenauswahl im Buchungsjournal verbergen.</div>
<div class="cb" style="left:774px;top:528px"></div>
<div class="t" style="left:790px;top:527px;font-size:13.2px">Bei Anfangs- und Endsaldo 0 nicht drucken</div>
<div class="a" style="left:767px;top:548px;width:485px;height:40px;border:1px solid #a0a0a0"></div>
<div class="cb" style="left:774px;top:552px"></div>
<div class="t" style="left:790px;top:551px;font-size:13.25px">Konto beim Jahresübertrag saldieren auf Konto:</div>
<div class="btn" style="left:1083px;top:551px;width:26px;height:19px"></div>
<div class="t" style="left:1083px;top:553px;width:26px;text-align:center">...</div>
<div class="btn" style="left:1117px;top:551px;width:26px;height:19px"></div>
<div class="t" style="left:1117px;top:553px;width:26px;text-align:center">x</div>
<div class="t" style="left:772px;top:599px">Währung</div>
<div class="inp" style="left:834px;top:594px;width:61px;height:24px"></div>
<div class="t" style="left:915px;top:599px;font-size:13.55px">Valuta Ausgleichskonto</div>
<div class="inp" style="left:1061px;top:594px;width:72px;height:24px"></div>
<div class="t" style="left:772px;top:637px;font-weight:bold;font-size:14px">Anfangssaldo Soll:</div>
<div class="inp" style="left:909px;top:632px;width:120px;height:24px"></div>
<div class="t r" style="left:909px;top:635px;width:117px;font-weight:bold;font-size:14px">74'499.15</div>
<div class="t" style="left:1039px;top:637px;font-weight:bold;font-size:14px">Haben:</div>
<div class="inp" style="left:1093px;top:632px;width:119px;height:24px"></div>
<div class="t r" style="left:1093px;top:635px;width:116px;font-weight:bold;font-size:14px">0.00</div>
<div class="a" style="left:769px;top:680px;width:456px;height:92px;border:1px solid #dcdcdc"></div>
<div class="t" style="left:775px;top:673px;background:#f9f9f9;padding:0 2px;font-size:13.5px">Geschäftsvermögen</div>
<div class="rb" style="left:777px;top:693px"></div>
<div class="t" style="left:793px;top:692px">nicht definiert / Privat</div>
<div class="a" style="left:777px;top:713px;width:13px;height:13px;border-radius:50%;background:#0a5fc4"></div>
<div class="a" style="left:781px;top:717px;width:5px;height:5px;border-radius:50%;background:#fff"></div>
<div class="t" style="left:793px;top:712px;font-size:13.55px">bewegliches Geschäftsvermögen</div>
<div class="rb" style="left:777px;top:733px"></div>
<div class="t" style="left:793px;top:732px;font-size:13.45px">Geschäftsliegenschaft</div>
<div class="rb" style="left:777px;top:753px"></div>
<div class="t" style="left:793px;top:752px;font-size:13.3px">Geschäftsschulden</div>
</body></html>
